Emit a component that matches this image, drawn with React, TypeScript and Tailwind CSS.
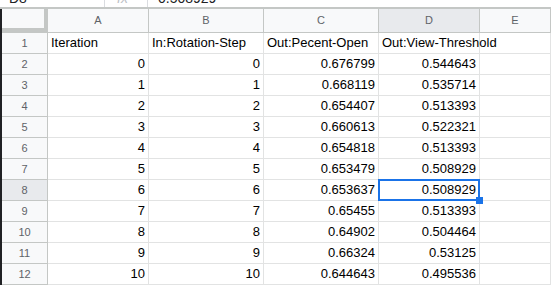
const rows: [string, string, string, string][] = [
  ['0', '0', '0.676799', '0.544643'],
  ['1', '1', '0.668119', '0.535714'],
  ['2', '2', '0.654407', '0.513393'],
  ['3', '3', '0.660613', '0.522321'],
  ['4', '4', '0.654818', '0.513393'],
  ['5', '5', '0.653479', '0.508929'],
  ['6', '6', '0.653637', '0.508929'],
  ['7', '7', '0.65455', '0.513393'],
  ['8', '8', '0.64902', '0.504464'],
  ['9', '9', '0.66324', '0.53125'],
  ['10', '10', '0.644643', '0.495536'],
];

const cols = 'grid grid-cols-[46px_101px_115px_115px_101px_1fr]';
const cell = 'h-[21px] border-r border-b border-[#e2e3e3] px-[3px] text-[13px] leading-[20px] text-black whitespace-nowrap overflow-hidden';

export default function App() {
  return (
    <div className="w-[551px] h-[285px] overflow-hidden bg-white font-['Liberation_Sans',Arial,sans-serif]">
      {/* Formula bar, cut at top */}
      <div className="h-[7px] overflow-hidden flex">
        <div className="w-[105px] border-r border-[#dadce0]">
          <div className="mt-[-11px] pl-[9px] text-[14px] leading-[19px] text-[#202124]">D8</div>
        </div>
        <div className="w-[43px] border-r border-[#dadce0]">
          <div className="mt-[-11px] pl-[12px] text-[14px] leading-[19px] italic text-[#bdc1c6]">fx</div>
        </div>
        <div className="flex-1">
          <div className="mt-[-11px] pl-[10px] text-[14px] leading-[19px] text-[#202124]">0.508929</div>
        </div>
      </div>
      <div className="h-[2px] bg-[#c4c7c5]" />

      <div className="flex">
        <div className="w-[2px] bg-[#202124]" />
        <div className="flex-1">
          {/* Column headers */}
          <div className={cols}>
            <div className="h-[24px] bg-[#f8f9fa] border-r-[4px] border-b-[5px] border-[#c4c7c5]" />
            {['A', 'B', 'C', 'D', 'E'].map((c) => (
              <div
                key={c}
                className={`h-[24px] border-r border-b border-[#c4c7c5] flex items-center justify-center text-[11px] text-[#5f6368] ${c === 'D' ? 'bg-[#e8eaed]' : 'bg-[#f8f9fa]'}`}
              >
                {c}
              </div>
            ))}
          </div>

          {/* Row 1 */}
          <div className={cols}>
            <div className="h-[21px] border-r border-b border-[#c4c7c5] bg-[#f8f9fa] flex items-center justify-center text-[11px] text-[#5f6368]">1</div>
            <div className={cell}>Iteration</div>
            <div className={cell}>In:Rotation-Step</div>
            <div className={cell}>Out:Pecent-Open</div>
            <div className={`${cell} !overflow-visible`}>Out:View-Threshold</div>
            <div className={cell} />
          </div>

          {rows.map((r, i) => {
            const n = i + 2;
            const sel = n === 8;
            return (
              <div key={n} className={cols}>
                <div
                  className={`h-[21px] border-r border-b border-[#c4c7c5] flex items-center justify-center text-[11px] text-[#5f6368] ${sel ? 'bg-[#e8eaed]' : 'bg-[#f8f9fa]'}`}
                >
                  {n}
                </div>
                <div className={`${cell} text-right`}>{r[0]}</div>
                <div className={`${cell} text-right`}>{r[1]}</div>
                <div className={`${cell} text-right`}>{r[2]}</div>
                <div className={`${cell} text-right relative ${sel ? '!overflow-visible z-10' : ''}`}>
                  {r[3]}
                  {sel && (
                    <>
                      <div className="absolute left-[-1px] top-[-1px] right-[-1px] bottom-[-1px] border-2 border-[#1a73e8]" />
                      <div className="absolute right-[-4px] bottom-[-4px] w-[7px] h-[7px] bg-[#1a73e8]" />
                    </>
                  )}
                </div>
                <div className={cell} />
              </div>
            );
          })}
        </div>
      </div>
    </div>
  );
}
